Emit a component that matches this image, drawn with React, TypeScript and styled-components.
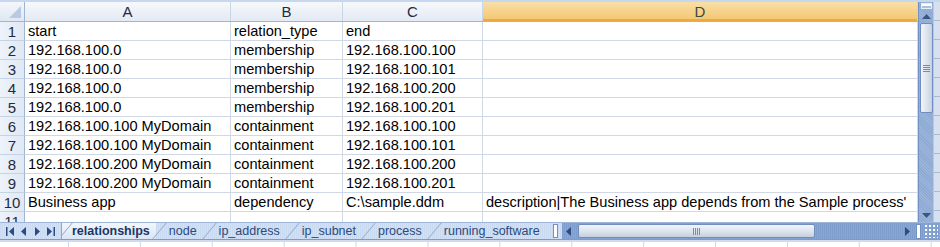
import React from "react"
import styled, { createGlobalStyle, css } from "styled-components"

const GlobalStyle = createGlobalStyle`
    html, body {
        margin: 0;
        padding: 0;
        background: #ffffff;
    }
    body {
        font-family: "Liberation Sans", Arial, sans-serif;
    }
`

const COLS = "25px 206px 112px 140px 435px"

const Frame = styled.div({
    width: "940px",
    height: "247px",
    display: "flex",
    flexDirection: "column",
    overflow: "hidden",
    background: "#ffffff",
})

const TopEdge = styled.div({
    height: "2px",
    flex: "none",
    background: "#c6d7ee",
})

const Body = styled.div({
    height: "220px",
    flex: "none",
    display: "flex",
})

const Sheet = styled.div({
    width: "918px",
    flex: "none",
    overflow: "hidden",
})

const HeaderRow = styled.div({
    display: "grid",
    gridTemplateColumns: COLS,
    height: "20px",
    borderBottom: "1px solid #9eb6ce",
    boxSizing: "border-box",
})

const Corner = styled.div({
    position: "relative",
    background: "linear-gradient(#f4f7fb, #dfe7f2)",
    borderRight: "1px solid #9eb6ce",
    "&::after": {
        content: "''",
        position: "absolute",
        right: "3px",
        bottom: "3px",
        borderStyle: "solid",
        borderWidth: "0 0 12px 12px",
        borderColor: "transparent transparent #b8cae3 transparent",
    },
})

const ColHead = styled.div<{ $active?: boolean }>(({ $active }) => ({
    display: "flex",
    alignItems: "center",
    justifyContent: "center",
    fontSize: "15px",
    color: $active ? "#3b4b3e" : "#1e2b3f",
    borderRight: "1px solid #c9d6e7",
    background: $active
        ? "linear-gradient(#f9dfa8, #f3c66e)"
        : "linear-gradient(#f6f8fb, #e3eaf4)",
    boxShadow: $active ? "inset 0 -2px 0 #f0a93e" : "none",
}))

const Row = styled.div({
    display: "grid",
    gridTemplateColumns: COLS,
    height: "19px",
})

const RowHead = styled.div({
    display: "flex",
    alignItems: "center",
    justifyContent: "center",
    fontSize: "15px",
    color: "#1e2b3f",
    background: "linear-gradient(90deg, #eef3fa, #e0e8f3)",
    borderRight: "1px solid #9eb6ce",
    borderBottom: "1px solid #c5d3e6",
})

const Cell = styled.div({
    display: "flex",
    alignItems: "center",
    paddingLeft: "3px",
    fontSize: "14.6px",
    color: "#000000",
    whiteSpace: "nowrap",
    overflow: "hidden",
    borderRight: "1px solid #d0d7e5",
    borderBottom: "1px solid #d0d7e5",
})

const VScroll = styled.div({
    width: "15px",
    flex: "none",
    display: "flex",
    flexDirection: "column",
    alignItems: "center",
    boxSizing: "border-box",
    borderLeft: "1px solid #7391c3",
    background: "repeating-linear-gradient(45deg, #8eaad4 0 1px, #9bb4da 1px 2px)",
})

const SplitBox = styled.div({
    width: "11px",
    height: "6px",
    marginTop: "1px",
    boxSizing: "border-box",
    border: "1px solid #e8eef8",
    background: "#aac0e0",
    boxShadow: "inset 0 2px 0 #ffffff",
})

const ArrowSlot = styled.div<{ $push?: "top" | "left" }>(({ $push }) => ({
    width: "14px",
    height: "14px",
    flex: "none",
    display: "flex",
    alignItems: "center",
    justifyContent: "center",
    marginTop: $push === "top" ? "auto" : "0",
    marginLeft: $push === "left" ? "auto" : "0",
}))

const VThumb = styled.div({
    width: "13px",
    height: "90px",
    flex: "none",
    boxSizing: "border-box",
    border: "1px solid #6f8dbf",
    borderRadius: "2px",
    background: "linear-gradient(90deg, #f2f5fa, #d9e1ec 60%, #c6d1e1)",
    display: "flex",
    flexDirection: "column",
    alignItems: "center",
    justifyContent: "center",
    gap: "1px",
})

const GripLine = styled.div<{ $vertical?: boolean }>(({ $vertical }) => ({
    background: "#7c8ca6",
    ...($vertical ? { width: "1px", height: "7px" } : { width: "7px", height: "1px" }),
}))

const RightEdge = styled.div({
    flex: 1,
    background: "repeating-linear-gradient(#d6e0ee 0 18px, #a9b9cf 18px 19px)",
    borderLeft: "1px solid #b7c8e2",
})

const TabBar = styled.div({
    height: "17px",
    flex: "none",
    display: "flex",
    background: "repeating-linear-gradient(90deg, #c9d9ef 0 1px, #d3e1f3 1px 2px)",
    borderTop: "1px solid #9db5d8",
    boxSizing: "border-box",
})

const Nav = styled.div({
    width: "62px",
    flex: "none",
    display: "flex",
    alignItems: "center",
    justifyContent: "space-around",
    padding: "0 3px",
    boxSizing: "border-box",
    borderRight: "1px solid #8ea8cf",
})

const Tabs = styled.div({
    width: "491px",
    flex: "none",
    display: "flex",
    overflow: "hidden",
})

const Tab = styled.div<{ $active?: boolean }>(({ $active }) => css`
    position: relative;
    display: flex;
    align-items: center;
    font-size: 12.5px;
    white-space: nowrap;
    color: ${$active ? "#1b3566" : "#2b4a7e"};
    font-weight: ${$active ? "bold" : "normal"};
    padding: ${$active ? "0 6px 0 10px" : "0 9px 0 13px"};
    background: ${$active ? "linear-gradient(#f2f6fc, #dbe6f5)" : "transparent"};
    &::before {
        content: "";
        position: absolute;
        left: 3px;
        top: 0;
        bottom: 0;
        width: 1px;
        background: #8fa9d0;
        transform: skewX(-40deg);
    }
`)

const HSplit = styled.div({
    width: "5px",
    flex: "none",
    margin: "1px 4px 1px 0",
    boxSizing: "border-box",
    border: "1px solid #7391c3",
    background: "#ffffff",
})

const HScroll = styled.div({
    flex: 1,
    display: "flex",
    alignItems: "center",
    background: "repeating-linear-gradient(90deg, #7e9dcd 0 1px, #8aa7d3 1px 2px)",
    paddingRight: "2px",
})

const HThumb = styled.div({
    width: "237px",
    height: "14px",
    flex: "none",
    marginLeft: "2px",
    boxSizing: "border-box",
    border: "1px solid #6f8dbf",
    borderRadius: "2px",
    background: "linear-gradient(#f2f5fa, #d9e1ec 60%, #c4cfdf)",
    display: "flex",
    alignItems: "center",
    justifyContent: "center",
    gap: "1px",
})

const HEnd = styled.div({
    width: "3px",
    height: "13px",
    flex: "none",
    margin: "0 3px 0 2px",
    border: "1px solid #7391c3",
    background: "#ffffff",
})

const Grip = styled.div({
    width: "14px",
    height: "14px",
    flex: "none",
    background: "radial-gradient(circle, #ffffff 0.8px, transparent 1px) 0 0 / 4px 4px",
})

const BottomLine = styled.div({
    height: "3px",
    flex: "none",
    background: "#d0dbea",
    borderTop: "1px solid #7f9cc8",
    boxSizing: "border-box",
})

const BelowGrid = styled.div({
    flex: 1,
    backgroundImage: "linear-gradient(90deg, #d0d7e5 1px, transparent 1px)",
    backgroundSize: "71.9px 100%",
    backgroundPosition: "68px 0",
})

const Tri = ({ dir, bar }: { dir: "left" | "right" | "up" | "down"; bar?: boolean }) => {
    const fill = "#2d4b80"
    if (dir === "up") return <svg width="9" height="5"><polygon points="0,5 4.5,0 9,5" fill="#3b5480" /></svg>
    if (dir === "down") return <svg width="9" height="5"><polygon points="0,0 4.5,5 9,0" fill="#3b5480" /></svg>
    if (dir === "left")
        return (
            <svg width="8" height="9">
                {bar && <rect x="0" y="0" width="1.5" height="9" fill={fill} />}
                <polygon points={bar ? "8,0 3,4.5 8,9" : "6,0 1,4.5 6,9"} fill={fill} />
            </svg>
        )
    return (
        <svg width="8" height="9">
            <polygon points={bar ? "0,0 5,4.5 0,9" : "2,0 7,4.5 2,9"} fill={fill} />
            {bar && <rect x="6.5" y="0" width="1.5" height="9" fill={fill} />}
        </svg>
    )
}

const rows: string[][] = [
    ["start", "relation_type", "end", ""],
    ["192.168.100.0", "membership", "192.168.100.100", ""],
    ["192.168.100.0", "membership", "192.168.100.101", ""],
    ["192.168.100.0", "membership", "192.168.100.200", ""],
    ["192.168.100.0", "membership", "192.168.100.201", ""],
    ["192.168.100.100 MyDomain", "containment", "192.168.100.100", ""],
    ["192.168.100.100 MyDomain", "containment", "192.168.100.101", ""],
    ["192.168.100.200 MyDomain", "containment", "192.168.100.200", ""],
    ["192.168.100.200 MyDomain", "containment", "192.168.100.201", ""],
    ["Business app", "dependency", "C:\\sample.ddm", "description|The Business app depends from the Sample process'"],
    ["", "", "", ""],
]

const sheets = ["relationships", "node", "ip_address", "ip_subnet", "process", "running_software"]

const App: React.FC = () => {
    return (
        <>
            <GlobalStyle />
            <Frame>
                <TopEdge />
                <Body>
                    <Sheet>
                        <HeaderRow>
                            <Corner />
                            <ColHead>A</ColHead>
                            <ColHead>B</ColHead>
                            <ColHead>C</ColHead>
                            <ColHead $active>D</ColHead>
                        </HeaderRow>
                        {rows.map((row, i) => (
                            <Row key={i}>
                                <RowHead>{i + 1}</RowHead>
                                {row.map((value, j) => (
                                    <Cell key={j}>{value}</Cell>
                                ))}
                            </Row>
                        ))}
                    </Sheet>
                    <VScroll>
                        <SplitBox />
                        <ArrowSlot><Tri dir="up" /></ArrowSlot>
                        <VThumb>
                            <GripLine />
                            <GripLine />
                            <GripLine />
                            <GripLine />
                        </VThumb>
                        <ArrowSlot $push="top"><Tri dir="down" /></ArrowSlot>
                    </VScroll>
                    <RightEdge />
                </Body>
                <TabBar>
                    <Nav>
                        <Tri dir="left" bar />
                        <Tri dir="left" />
                        <Tri dir="right" />
                        <Tri dir="right" bar />
                    </Nav>
                    <Tabs>
                        {sheets.map((name, i) => (
                            <Tab key={name} $active={i === 0}>{name}</Tab>
                        ))}
                    </Tabs>
                    <HSplit />
                    <HScroll>
                        <ArrowSlot><Tri dir="left" /></ArrowSlot>
                        <HThumb>
                            <GripLine $vertical />
                            <GripLine $vertical />
                            <GripLine $vertical />
                            <GripLine $vertical />
                        </HThumb>
                        <ArrowSlot $push="left"><Tri dir="right" /></ArrowSlot>
                        <HEnd />
                        <Grip />
                    </HScroll>
                </TabBar>
                <BottomLine />
                <BelowGrid />
            </Frame>
        </>
    )
}

export default App
